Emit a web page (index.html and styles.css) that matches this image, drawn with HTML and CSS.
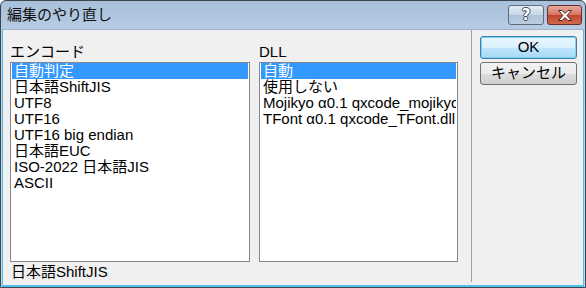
FILE: index.html
```html
<!DOCTYPE html>
<html>
<head>
<meta charset="utf-8">
<title>編集のやり直し</title>
<link rel="stylesheet" href="styles.css">
</head>
<body>

<div class="window">
	<div class="titlebar">
		<span class="title">編集のやり直し</span>
		<span class="capbtn helpbtn">?</span>
		<span class="capbtn closebtn">
			<svg width="16" height="13" viewBox="0 0 16 13">
				<path d="M1.5 1.5 L5 1.5 L8 4.5 L11 1.5 L14.5 1.5 L10 6.5 L14.5 11.5 L11 11.5 L8 8.5 L5 11.5 L1.5 11.5 L6 6.5 Z" fill="#ffffff" stroke="#4a2a2a" stroke-width="1" stroke-linejoin="round"/>
			</svg>
		</span>
	</div>

	<div class="client">
		<div class="main">
			<div class="cols">
				<div class="col enccol">
					<div class="label">エンコード</div>
					<div class="listbox">
						<div class="item sel">自動判定</div>
						<div class="item">日本語ShiftJIS</div>
						<div class="item">UTF8</div>
						<div class="item">UTF16</div>
						<div class="item">UTF16 big endian</div>
						<div class="item">日本語EUC</div>
						<div class="item">ISO-2022 日本語JIS</div>
						<div class="item">ASCII</div>
					</div>
				</div>
				<div class="col dllcol">
					<div class="label">DLL</div>
					<div class="listbox">
						<div class="item sel">自動</div>
						<div class="item">使用しない</div>
						<div class="item">Mojikyo α0.1 qxcode_mojikyo.dll</div>
						<div class="item">TFont α0.1 qxcode_TFont.dll</div>
					</div>
				</div>
			</div>
			<div class="status">日本語ShiftJIS</div>
		</div>

		<div class="sep"></div>

		<div class="side">
			<div class="button default">OK</div>
			<div class="button">キャンセル</div>
		</div>
	</div>
</div>

</body>
</html>
```

FILE: styles.css
```css
body {
	margin: 0;
	font-family: "Liberation Sans", "Noto Sans CJK JP", sans-serif;
	font-size: 15px;
	line-height: 16px;
	color: #000000;
}
.window {
	width: 586px;
	height: 288px;
	box-sizing: border-box;
	display: flex;
	flex-direction: column;
	border: 1px solid #3c4650;
	border-radius: 6px 6px 0 0;
	background: linear-gradient(#a9c0da, #bcd1e8 40px, #c4d8ee);
}
.titlebar {
	height: 28px;
	display: flex;
	align-items: flex-start;
}
.title {
	flex: 1;
	padding: 6px 0 0 6px;
	font-size: 15px;
	line-height: 16px;
	color: #111111;
}
.capbtn {
	margin-top: 4px;
	height: 20px;
	box-sizing: border-box;
	border: 1px solid #5d6b7c;
	border-radius: 3px;
	display: flex;
	align-items: center;
	justify-content: center;
}
.helpbtn {
	width: 36px;
	margin-right: 3px;
	background: linear-gradient(#e3ebf4, #c7d6e6 50%, #afc3da 51%, #bccde0);
	color: #ffffff;
	font-family: "DejaVu Sans", sans-serif;
	font-weight: bold;
	font-size: 15px;
	text-shadow: -1px 0 #3b4a5c, 1px 0 #3b4a5c, 0 -1px #3b4a5c, 0 1px #3b4a5c;
}
.closebtn {
	width: 35px;
	margin-right: 3px;
	border-color: #6a2c24;
	background: linear-gradient(#e8a99d, #d5735f 50%, #c2432c 51%, #cf6b4f);
}
.client {
	flex: 1;
	display: flex;
	margin: 0 1px 0 1px;
	background: #f0f0f0;
	border: 1px solid #4fc0e8;
	border-top: 1px solid #9fb4cc;
	border-bottom: 2px solid #4fc0e8;
}
.main {
	padding: 14px 0 0 7px;
	display: flex;
	flex-direction: column;
}
.cols {
	display: flex;
	gap: 9px;
}
.label {
	height: 16px;
	margin-bottom: 2px;
}
.listbox {
	height: 200px;
	box-sizing: border-box;
	border: 1px solid #828790;
	background: #ffffff;
	padding: 0 1px;
	overflow: hidden;
}
.enccol .listbox {
	width: 240px;
}
.dllcol .listbox {
	width: 199px;
}
.item {
	height: 16px;
	padding-left: 2px;
	white-space: nowrap;
	overflow: hidden;
}
.sel {
	background: #3399ff;
	color: #ffffff;
}
.status {
	margin-top: 2px;
	padding-left: 1px;
}
.sep {
	width: 1px;
	margin: 0 8px 3px 13px;
	background: #a0a0a0;
}
.side {
	padding-top: 6px;
	display: flex;
	flex-direction: column;
	gap: 3px;
}
.button {
	width: 97px;
	height: 23px;
	box-sizing: border-box;
	border: 1px solid #707070;
	border-radius: 3px;
	background: linear-gradient(#f2f2f2, #ebebeb 50%, #dddddd 51%, #cfcfcf);
	text-align: center;
	line-height: 20px;
}
.default {
	border-color: #3c7fb1;
	box-shadow: inset 0 0 0 1px #7ed3f5;
	background: linear-gradient(#eaf6fd, #d9f0fc 50%, #bee6fd 51%, #a7d9f5);
}
```
